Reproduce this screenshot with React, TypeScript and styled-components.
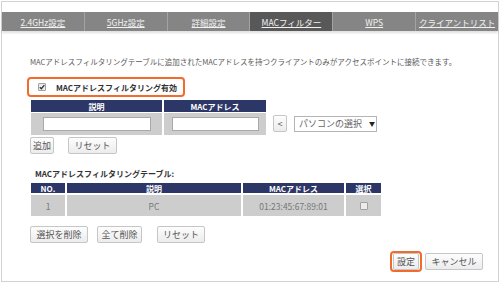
import React from "react";
import styled, { createGlobalStyle } from "styled-components";

const GlobalStyle = createGlobalStyle`
  body {
    margin: 0;
    background: #ffffff;
    font-family: "Noto Sans CJK JP", "Noto Sans", sans-serif;
  }
`;

const tabs = ["2.4GHz設定", "5GHz設定", "詳細設定", "MACフィルター", "WPS", "クライアントリスト"];

const entries = [{ no: 1, name: "PC", mac: "01:23:45:67:89:01" }];

function Check({ checked }: { checked?: boolean }) {
  return (
    <CheckBox>
      {checked && (
        <svg width="6" height="6" viewBox="0 0 6 6">
          <path d="M0.8 3.2 L2.4 4.7 L5.3 1.2" fill="none" stroke="#333" strokeWidth="1.3" />
        </svg>
      )}
    </CheckBox>
  );
}

function App() {
  return (
    <Frame>
      <GlobalStyle />
      <TabBar>
        {tabs.map((t, i) => (
          <Tab key={t} $active={i === 3} $first={i === 0}>
            {t}
          </Tab>
        ))}
      </TabBar>
      <Content>
        <Description>
          MACアドレスフィルタリングテーブルに追加されたMACアドレスを持つクライアントのみがアクセスポイントに接続できます。
        </Description>
        <FilterToggle>
          <Check checked />
          <ToggleLabel>MACアドレスフィルタリング有効</ToggleLabel>
        </FilterToggle>

        <InputArea>
          <InputGrid>
            <HeadCell>説明</HeadCell>
            <HeadCell>MACアドレス</HeadCell>
            <BodyCell>
              <TextBox $w={108} />
            </BodyCell>
            <BodyCell>
              <TextBox $w={87} />
            </BodyCell>
          </InputGrid>
          <SideControls>
            <Button $w={14}>&lt;</Button>
            <Select>
              パソコンの選択<Arrow>▼</Arrow>
            </Select>
          </SideControls>
        </InputArea>
        <ButtonRow $top={2}>
          <Button $w={24}>追加</Button>
          <Button $w={49} $gap={14}>リセット</Button>
        </ButtonRow>

        <SubTitle>MACアドレスフィルタリングテーブル:</SubTitle>
        <ListGrid>
          <HeadCell>NO.</HeadCell>
          <HeadCell>説明</HeadCell>
          <HeadCell>MACアドレス</HeadCell>
          <HeadCell>選択</HeadCell>
          {entries.map((e) => (
            <React.Fragment key={e.no}>
              <BodyCell>{e.no}</BodyCell>
              <BodyCell>{e.name}</BodyCell>
              <BodyCell>{e.mac}</BodyCell>
              <BodyCell>
                <Check />
              </BodyCell>
            </React.Fragment>
          ))}
        </ListGrid>
        <ButtonRow $top={10}>
          <Button $w={58}>選択を削除</Button>
          <Button $w={45} $gap={9}>全て削除</Button>
          <Button $w={48} $gap={15}>リセット</Button>
        </ButtonRow>

        <Footer>
          <Highlight>
            <Button $w={26}>設定</Button>
          </Highlight>
          <Button $w={58}>キャンセル</Button>
        </Footer>
      </Content>
    </Frame>
  );
}

const Frame = styled.div`
  margin: 1px 0 0 1px;
  width: 498px;
  height: 281px;
  box-sizing: border-box;
  border: 1px solid #d2d2d2;
  display: flex;
  flex-direction: column;
`;

const TabBar = styled.div`
  margin-top: 10px;
  height: 19px;
  display: flex;
  background: #858585;
  box-shadow: 0 2px 2px rgba(0, 0, 0, 0.12);
`;

const Tab = styled.div<{ $active?: boolean; $first?: boolean }>`
  flex: 1;
  display: flex;
  align-items: center;
  justify-content: center;
  font-size: 8.5px;
  color: #f2f2f2;
  text-decoration: underline;
  background: ${(p) => (p.$active ? "#585858" : "transparent")};
  border-left: ${(p) => (p.$first ? "none" : "1px solid #a3a3a3")};
`;

const Content = styled.div`
  display: flex;
  flex-direction: column;
  align-items: flex-start;
  padding: 0 15px 0 28px;
`;

const Description = styled.div`
  margin-top: 26px;
  font-size: 7.5px;
  line-height: 10px;
  color: #5a5a5a;
  white-space: nowrap;
`;

const FilterToggle = styled.div`
  margin: 10px 0 0 -3px;
  width: 158px;
  height: 20px;
  box-sizing: border-box;
  border: 2px solid #f26a2c;
  border-radius: 4px;
  display: flex;
  align-items: center;
  gap: 10px;
  padding-left: 9px;
`;

const CheckBox = styled.span`
  width: 8px;
  height: 8px;
  box-sizing: border-box;
  border: 1px solid #a0a0a0;
  border-radius: 1px;
  background: #ececec;
  display: inline-flex;
  align-items: center;
  justify-content: center;
`;

const ToggleLabel = styled.span`
  font-size: 8px;
  font-weight: bold;
  color: #333;
  white-space: nowrap;
`;

const InputArea = styled.div`
  margin: 3px 0 0 1px;
  display: flex;
  align-items: flex-end;
`;

const InputGrid = styled.div`
  display: grid;
  grid-template-columns: 131px 102px;
  grid-template-rows: 12px 22px;
  gap: 1px 2px;
`;

const HeadCell = styled.div`
  background: #2c3768;
  color: #ffffff;
  font-size: 8px;
  font-weight: bold;
  display: flex;
  align-items: center;
  justify-content: center;
  white-space: nowrap;
`;

const BodyCell = styled.div`
  background: #cdcdcd;
  color: #777;
  font-size: 8.5px;
  display: flex;
  align-items: center;
  justify-content: center;
`;

const TextBox = styled.input<{ $w: number }>`
  width: ${(p) => p.$w}px;
  height: 14px;
  box-sizing: border-box;
  border: 1px solid #a9a9a9;
  background: #fff;
  padding: 0 2px;
  margin: 0;
`;

const SideControls = styled.div`
  display: flex;
  align-items: center;
  gap: 7px;
  margin: 0 0 3px 7px;
`;

const Button = styled.button<{ $w: number; $gap?: number }>`
  width: ${(p) => p.$w}px;
  height: 17px;
  margin: 0 0 0 ${(p) => p.$gap ?? 0}px;
  padding: 0;
  box-sizing: border-box;
  border: 1px solid #c6c6c6;
  border-radius: 2px;
  background: linear-gradient(#fdfdfd, #ececec);
  color: #555;
  font-family: inherit;
  font-size: 9px;
  line-height: 15px;
  white-space: nowrap;
`;

const Select = styled.div`
  width: 83px;
  height: 16px;
  box-sizing: border-box;
  border: 1px solid #b5b5b5;
  background: #fff;
  color: #666;
  font-size: 9px;
  display: flex;
  align-items: center;
  padding-left: 4px;
  white-space: nowrap;
`;

const Arrow = styled.span`
  font-size: 6px;
  color: #222;
  margin-left: 7px;
`;

const ButtonRow = styled.div<{ $top: number }>`
  margin-top: ${(p) => p.$top}px;
  display: flex;
`;

const SubTitle = styled.div`
  margin: 15px 0 0 5px;
  font-size: 8px;
  line-height: 10px;
  font-weight: bold;
  color: #333;
`;

const ListGrid = styled.div`
  margin: 4px 0 0 1px;
  display: grid;
  grid-template-columns: 34px 174px 101px 35px;
  grid-template-rows: 10px 21px;
  gap: 2px;
`;

const Footer = styled.div`
  margin-top: 8px;
  align-self: flex-end;
  display: flex;
  align-items: center;
  gap: 3px;
`;

const Highlight = styled.div`
  height: 21px;
  box-sizing: border-box;
  border: 2px solid #f26a2c;
  border-radius: 4px;
  padding: 0 1px;
  display: flex;
  align-items: center;
`;

export default App;
